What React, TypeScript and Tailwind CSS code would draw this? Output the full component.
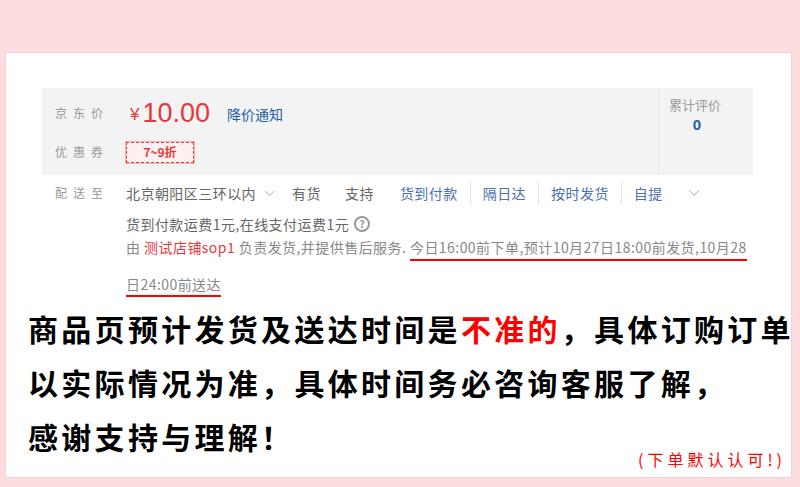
import { ChevronDown } from "lucide-react";

const services = ["货到付款", "隔日达", "按时发货", "自提"];

function App() {
  return (
    <div className="w-[800px] h-[487px] overflow-hidden bg-[#fddde0] font-['Noto_Sans_CJK_SC',sans-serif]">
      <div className="h-[52px]" />

      <div className="ml-[5px] w-[787px] h-[426px] bg-white border border-[#f8d0d4]">
        {/* price box */}
        <div className="mt-[35px] ml-[36px] w-[711px] h-[87px] bg-[#f3f3f3] flex">
          <div className="flex-1 pl-[13px] pt-[10px]">
            <div className="flex items-center h-[30px]">
              <span className="w-[75px] text-[12px] tracking-[6px] text-[#999]">京东价</span>
              <span className="text-[#e4393c] text-[17px] font-['Liberation_Sans',sans-serif] mt-[4px]">¥</span>
              <span className="text-[#e4393c] text-[27px] font-['Liberation_Sans',sans-serif] ml-[3px] leading-none">
                10.00
              </span>
              <span className="ml-[17px] text-[14px] text-[#1f5ea8] mt-[2px]">降价通知</span>
            </div>
            <div className="flex items-center mt-[13px] h-[22px]">
              <span className="w-[71px] text-[12px] tracking-[6px] text-[#999]">优惠券</span>
              <span className="w-[68px] h-[21px] flex items-center justify-center border border-dashed border-[#e4393c] bg-[#fdf0f0] text-[12px] font-bold text-[#e4393c] outline outline-1 outline-[#f7b5b6]">
                7~9折
              </span>
            </div>
          </div>
          <div className="w-[95px] border-l border-[#e7e7e7] pl-[10px] pt-[7px]">
            <div className="text-[13px] text-[#999] leading-[20px]">累计评价</div>
            <div className="w-[56px] text-center text-[15px] font-bold text-[#1f5ea8] leading-[20px] font-['Liberation_Sans',sans-serif]">
              0
            </div>
          </div>
        </div>

        {/* delivery */}
        <div className="ml-[49px] mt-[6px] flex">
          <span className="w-[71px] text-[12px] tracking-[6px] text-[#999] leading-[24px]">配送至</span>
          <div className="flex-1 text-[14px] text-[#666] tracking-[0.45px]">
            <div className="flex items-center h-[24px]">
              <span>北京朝阳区三环以内</span>
              <ChevronDown className="ml-[5px] w-[17px] h-[17px] text-[#999]" strokeWidth={1.2} />
              <span className="ml-[14px]">有货</span>
              <span className="ml-[24px]">支持</span>
              <div className="ml-[14px] flex items-center">
                {services.map((s, i) => (
                  <span
                    key={s}
                    className={
                      i < services.length - 1
                        ? "px-[12px] text-[#4d6fb3] border-r border-[#e3e3e3] leading-[22px]"
                        : "px-[12px] text-[#4d6fb3] leading-[22px]"
                    }
                  >
                    {s}
                  </span>
                ))}
              </div>
              <ChevronDown className="ml-[10px] w-[18px] h-[18px] text-[#999]" strokeWidth={1.2} />
            </div>
            <div className="flex items-center h-[24px] mt-[7px]">
              <span>货到付款运费1元,在线支付运费1元</span>
              <span className="ml-[5px] w-[16px] h-[16px] rounded-full border-2 border-[#999] text-[#999] text-[10px] font-bold flex items-center justify-center leading-none tracking-normal">
                ?
              </span>
            </div>
            <div className="h-[22px] whitespace-nowrap text-[#888] leading-[22px]">
              由 <span className="text-[#e4393c]">测试店铺sop1</span> 负责发货,并提供售后服务.{" "}
              <span className="inline-block border-b-2 border-[#ff0000] leading-[20px] pb-[2px]">
                今日16:00前下单,预计10月27日18:00前发货,10月28
              </span>
            </div>
            <div className="mt-[16px] text-[#888]">
              <span className="inline-block border-b-2 border-[#ff0000] leading-[20px] pb-[1px]">
                日24:00前送达
              </span>
            </div>
          </div>
        </div>

        {/* notice */}
        <div className="ml-[22px] mt-[4px] text-[30px] font-bold text-black tracking-[3.3px] leading-[54px] whitespace-nowrap">
          <div>
            商品页预计发货及送达时间是<span className="text-[#ff0000]">不准的</span>，具体订购订单
          </div>
          <div>以实际情况为准，具体时间务必咨询客服了解，</div>
          <div className="flex items-end justify-between">
            <span>感谢支持与理解！</span>
            <span className="mb-[-8px] mr-[5px] text-[16px] font-normal tracking-[4px] text-[#ff0000] leading-[24px]">
              (下单默认认可!)
            </span>
          </div>
        </div>
      </div>
    </div>
  );
}

export default App;
